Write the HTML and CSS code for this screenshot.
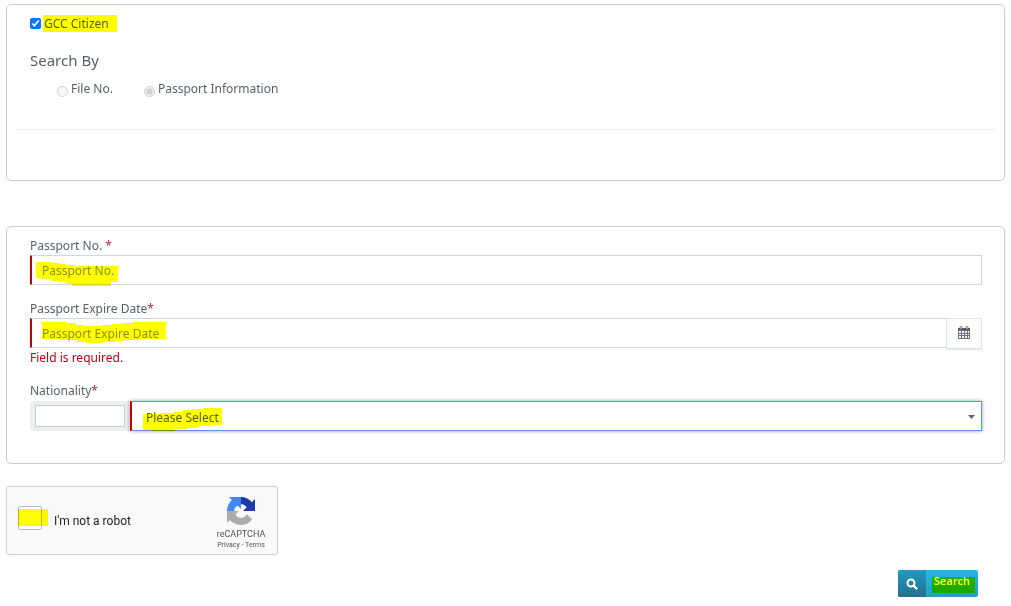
FILE: index.html
```html
<!DOCTYPE html>
<html lang="en">
<head>
<meta charset="utf-8">
<meta name="viewport" content="width=device-width, initial-scale=1">
<title>Passport search</title>
<link rel="stylesheet" href="styles.css">
</head>
<body>
<form class="page">
  <section class="panel panel-search">
    <div class="citizen">
      <input type="checkbox" id="gcc" class="citizen-box" checked>
      <label for="gcc" class="marked citizen-label">GCC Citizen</label>
    </div>
    <h2 class="title">Search By</h2>
    <div class="options">
      <span class="option"><input type="radio" name="by" id="by-file" class="radio" disabled><label for="by-file">File No.</label></span>
      <span class="option"><input type="radio" name="by" id="by-passport" class="radio" checked disabled><label for="by-passport">Passport Information</label></span>
    </div>
    <hr class="rule">
  </section>

  <section class="panel panel-fields">
    <div class="field">
      <label class="field-label" for="passport">Passport No. <span class="star">*</span></label>
      <div class="control">
        <input type="text" id="passport" class="text required" placeholder="Passport No.">
        <svg class="marker marker-passport" width="82" height="24" viewBox="0 0 82 24" aria-hidden="true"><path d="M0 0H16L17 1H24L25 2H30V3H38V4H82V20H75V24H36V22H29V20H22V19H15V17H5V16H0Z" fill="#ff0"/></svg>
      </div>
    </div>
    <div class="field">
      <label class="field-label" for="expiry">Passport Expire Date<span class="star">*</span></label>
      <div class="control">
        <input type="text" id="expiry" class="text required" placeholder="Passport Expire Date">
        <button type="button" class="calendar" aria-label="Choose date">
          <svg width="12" height="13" viewBox="0 0 12 13" aria-hidden="true"><path d="M0 2H12V13H0Z" fill="#6b6f80"/><path d="M1 5H3V7H1ZM4 5H6V7H4ZM7 5H9V7H7ZM10 5H11V7H10ZM1 8H3V9H1ZM4 8H6V9H4ZM7 8H9V9H7ZM10 8H11V9H10ZM1 10H3V12H1ZM4 10H6V12H4ZM7 10H9V12H7ZM10 10H11V12H10Z" fill="#fff"/><path d="M0 2H12V4H0Z" fill="#4f5860"/><path d="M2 1Q2 0 3 0T4 1V3H2ZM8 1Q8 0 9 0T10 1V3H8Z" fill="#dfe9f5" stroke="#59636c" stroke-width=".7"/></svg>
        </button>
        <svg class="marker marker-expiry" width="124" height="22" viewBox="0 0 124 22" aria-hidden="true"><path d="M0 0H25V1H34V3H43V4H60V3H70V2H80V1H92V0H124V17H99V18H82V19H73V20H61V21H44V20H35V18H17V17H0Z" fill="#ff0"/></svg>
      </div>
      <p class="error">Field is required.</p>
    </div>
    <div class="field">
      <label class="field-label field-label-tall" for="nation">Nationality<span class="star">*</span></label>
      <div class="control">
        <div class="code"><input type="text" class="code-input" aria-label="Nationality code"></div>
        <select id="nation" class="select required"><option>Please Select</option></select>
        <svg class="arrow" width="7" height="4" viewBox="0 0 7 4" aria-hidden="true"><path d="M0 0H7L3.500 4Z" fill="#666"/></svg>
        <svg class="marker marker-nation" width="79" height="23" viewBox="0 0 79 23" aria-hidden="true"><path d="M0 6H17V5H31V4H40V2H49V1H60V0H79V17H67V18H56V20H45V21H32V23H9V22H0Z" fill="#ff0"/></svg>
      </div>
    </div>
  </section>

  <section class="captcha">
    <div class="robot">
      <input type="checkbox" id="robot" class="robot-box">
      <svg class="marker marker-robot" width="30" height="17" viewBox="0 0 30 17" aria-hidden="true"><path d="M0 0H30V17H0Z" fill="#ff0"/></svg>
    </div>
    <label for="robot" class="robot-label">I'm not a robot</label>
    <div class="brand">
      <svg class="brand-logo" width="28" height="28" viewBox="0 0 64 64" aria-hidden="true">
        <path d="M64 31.955l-.002-1.374V4.687l-7.158 7.16C50.982 4.674 42.070.094 32.088.094c-10.388 0-19.616 4.960-25.464 12.642l11.733 11.857a15.550 15.550 0 0 1 4.754-5.334c2.050-1.600 4.952-2.906 8.968-2.906.485 0 .860.057 1.135.163 4.976.393 9.288 3.140 11.828 7.124l-8.307 8.307L64 31.953" fill="#1c3aa9"/>
        <path d="M31.862.094l-1.374.002H4.594l7.160 7.158C4.580 13.112 0 22.024 0 32.006c0 10.388 4.960 19.616 12.642 25.464L24.500 45.737a15.550 15.550 0 0 1-5.334-4.754c-1.600-2.050-2.906-4.952-2.906-8.968 0-.485.057-.860.163-1.135.393-4.976 3.140-9.288 7.124-11.828l8.307 8.307L31.861.094" fill="#4285f4"/>
        <path d="M.001 32.145l.002 1.374v25.894l7.158-7.160c5.858 7.174 14.770 11.754 24.752 11.754 10.388 0 19.616-4.960 25.464-12.642L45.644 39.508a15.550 15.550 0 0 1-4.754 5.334c-2.050 1.600-4.952 2.906-8.968 2.906-.485 0-.860-.057-1.135-.163-4.976-.393-9.288-3.140-11.828-7.124l8.307-8.307c-10.522.040-22.400.066-27.264-.010" fill="#ababab"/>
      </svg>
      <span class="brand-name">reCAPTCHA</span>
      <span class="brand-links"><a href="#">Privacy</a> - <a href="#">Terms</a></span>
    </div>
  </section>

  <div class="actions">
    <button type="submit" class="search">
      <span class="search-icon"><svg width="12" height="12" viewBox="0 0 12 12" aria-hidden="true"><circle cx="5" cy="5" r="3.500" fill="none" stroke="#fff" stroke-width="2"/><path d="M7.500 7.500L10.500 10.500" stroke="#fff" stroke-width="2.300" stroke-linecap="round"/></svg></span>
      <span class="search-text">Search</span>
      <svg class="marker marker-search" width="43" height="16" viewBox="0 0 43 16" aria-hidden="true"><path d="M0 0H43V16H0Z" fill="#ff0"/></svg>
    </button>
  </div>
</form>
</body>
</html>
```

FILE: styles.css
```css
* { box-sizing: border-box; }

body {
  margin: 0;
  background: #fff;
  color: #56616b;
  font: 12px/18px "Noto Sans", "Open Sans", sans-serif;
}

input, select, button { font: inherit; color: inherit; margin: 0; }

.page { padding: 4px 6px; }

.panel {
  border: 1px solid #ccc;
  border-radius: 5px;
}

.panel-search {
  min-height: 177px;
  padding: 10px 9px;
}

.citizen {
  display: flex;
  align-items: center;
  padding-left: 14px;
}

.citizen-box { width: 11px; height: 11px; margin-right: 2px; accent-color: #0075ff; }

.marked { background: #ff0; }

.citizen-label { width: 74px; line-height: 17px; padding-left: 1px; color: #565f0b; }

.title {
  margin: 18px 0 10px 14px;
  font-size: 15px;
  font-weight: 400;
  line-height: 20px;
}

.options { display: flex; gap: 31px; padding-left: 41px; }

.option { display: flex; align-items: center; gap: 3px; }

.radio { width: 11px; height: 11px; margin-top: 5px; }

.rule {
  height: 1px;
  margin: 31px 0 0;
  border: 0;
  background: #eee;
}

.panel-fields {
  margin-top: 45px;
  min-height: 238px;
  padding: 9px 22px 32px 23px;
}

.field { margin-bottom: 14px; }

.field:last-child { margin-bottom: 0; }

.field-label { display: block; line-height: 19px; }

.field-label-tall { padding-bottom: 1px; }

.star { color: #b5292f; }

.control { position: relative; display: flex; height: 30px; }

.text {
  flex: 1;
  min-width: 0;
  height: 30px;
  padding: 0 10px;
  border: 1px solid #cfd9db;
  border-radius: 0;
  background: #fff;
  outline: 0;
}

.text::placeholder { color: #8f8f8f; opacity: 1; }

.required { border-left: 2px solid #c80000; }

.calendar {
  display: flex;
  align-items: center;
  justify-content: center;
  width: 36px;
  height: 31px;
  margin-left: -1px;
  padding: 0 0 2px;
  border: 1px solid #dce4e6;
  background: #fff;
  box-shadow: 0 1px 1px #e4eaec;
}

.error { margin: 0; line-height: 19px; color: #c40012; }

.code {
  width: 100px;
  padding: 4px 5px;
  border-radius: 4px 0 0 4px;
  background: #ecf0f1;
}

.code-input {
  display: block;
  width: 90px;
  height: 22px;
  border: 1px solid #ccc;
  background: #fff;
}

.select {
  flex: 1;
  min-width: 0;
  height: 30px;
  padding: 3px 24px 0 14px;
  appearance: none;
  border: 1px solid #5897fb;
  border-left: 2px solid #c80000;
  border-radius: 0;
  background: #fff;
  box-shadow: 0 0 4px rgba(0, 0, 0, .4);
  outline: 0;
}

.arrow { position: absolute; right: 7px; top: 14px; pointer-events: none; }

/* Highlighter strokes laid over the text */
.marker { position: absolute; mix-blend-mode: multiply; pointer-events: none; }
.marker-passport { left: 6px; top: 7px; }
.marker-expiry { left: 12px; top: 4px; }
.marker-nation { left: 113px; top: 7px; }
.marker-robot { left: 0; top: 3px; }
.marker-search { right: 3px; top: 7px; }

.captcha {
  display: flex;
  align-items: center;
  width: 272px;
  height: 69px;
  margin-top: 22px;
  padding: 0 7px 0 11px;
  border: 1px solid #d3d3d3;
  border-radius: 3px;
  background: #f9f9f9;
  box-shadow: 0 0 2px rgba(0, 0, 0, .1);
  font-family: Roboto, sans-serif;
}

.robot { position: relative; height: 24px; margin-bottom: 5px; }

.robot-box {
  display: block;
  appearance: none;
  width: 24px;
  height: 24px;
  border: 1px solid #b9b9b9;
  border-radius: 2px;
  background: #fff;
}

.robot-label { margin-left: 12px; color: #222; }

.brand {
  display: flex;
  flex-direction: column;
  align-items: center;
  width: 58px;
  margin-left: auto;
  padding-top: 6px;
  color: #555;
}

.brand-name { margin-top: 4px; font-size: 9px; line-height: 11px; }

.brand-links { font-size: 7px; line-height: 11px; white-space: nowrap; }

.brand-links a { color: inherit; text-decoration: none; }

.actions { display: flex; justify-content: flex-end; padding: 15px 27px 0 0; }

.search {
  position: relative;
  display: flex;
  width: 80px;
  height: 27px;
  padding: 0;
  border: 0;
  border-radius: 2px;
  overflow: hidden;
  isolation: isolate;
  background: linear-gradient(#21b9e8, #20a0ca);
  color: #fff;
  font-size: 11px;
  font-weight: 600;
}

.search-icon {
  display: flex;
  align-items: center;
  justify-content: center;
  width: 28px;
  height: 27px;
  background: linear-gradient(#2299c1, #246f8b);
}

.search-text { flex: 1; padding: 2px 0 0 8px; line-height: 18px; text-align: left; color: #ff3; }
```
